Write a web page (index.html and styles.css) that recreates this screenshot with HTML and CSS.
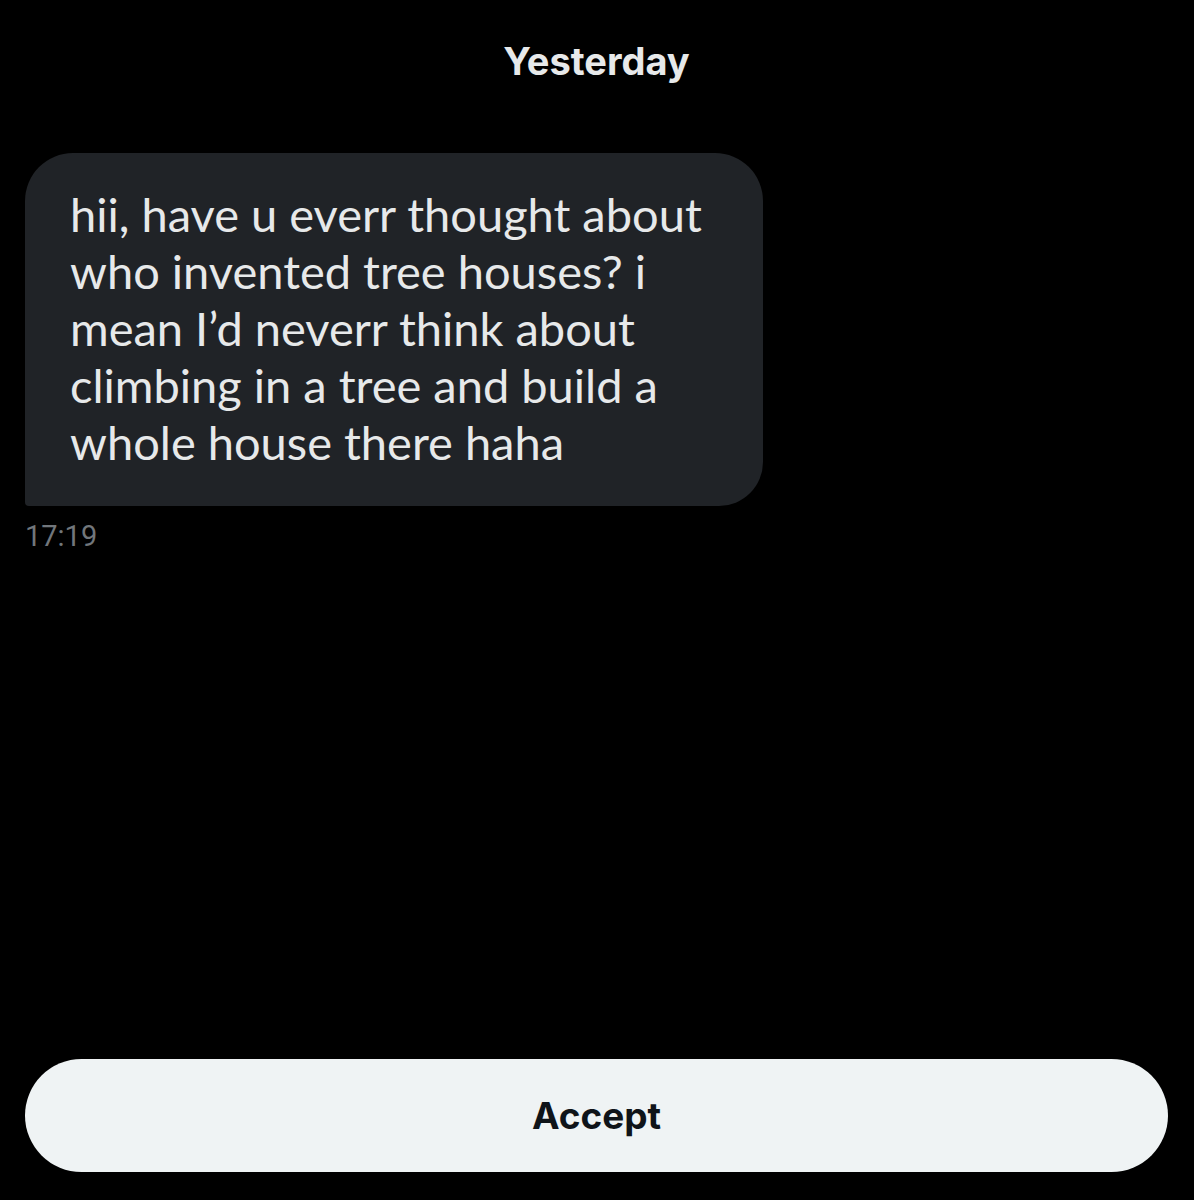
FILE: index.html
```html
<!DOCTYPE html>
<html>
<head>
<meta charset="utf-8">
<link rel="stylesheet" href="styles.css">
</head>
<body>
<div class="screen">
  <div class="day">Yesterday</div>
  <div class="msg">
    <div class="bubble">hii, have u everr thought about who invented tree houses? i mean I’d neverr think about climbing in a tree and build a whole house there haha</div>
    <div class="time">17:19</div>
  </div>
  <div class="actions">
    <button class="accept">Accept</button>
  </div>
</div>
</body>
</html>
```
FILE: styles.css
```css
html, body {
  margin: 0;
  padding: 0;
  background: #000;
}
.screen {
  height: 1200px;
  display: flex;
  flex-direction: column;
  box-sizing: border-box;
  padding: 0 26px 28px 25px;
}
.day {
  text-align: center;
  font-family: Inter, "Liberation Sans", sans-serif;
  font-weight: 700;
  font-size: 38px;
  color: #e7e9ea;
  padding-top: 37px;
  line-height: 48px;
}
.msg {
  margin-top: 68px;
  display: flex;
  flex-direction: column;
  align-items: flex-start;
}
.bubble {
  width: 738px;
  box-sizing: border-box;
  background: #202327;
  color: #e7e9ea;
  font-family: Lato, "Liberation Sans", sans-serif;
  font-size: 47px;
  line-height: 57px;
  padding: 33px 30px 35px 45px;
  border-radius: 48px 48px 44px 4px;
}
.time {
  margin-top: 12px;
  font-family: Roboto, "Liberation Sans", sans-serif;
  font-size: 29px;
  color: #71767b;
  line-height: 36px;
}
.actions {
  margin-top: auto;
}
.accept {
  display: block;
  width: 100%;
  height: 113px;
  border: 0;
  border-radius: 57px;
  background: #eff3f4;
  color: #0f1419;
  font-family: Inter, "Liberation Sans", sans-serif;
  font-weight: 700;
  font-size: 37px;
}
```
